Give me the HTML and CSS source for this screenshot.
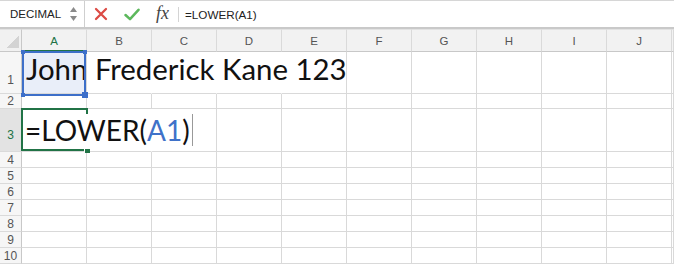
FILE: index.html
```html
<!DOCTYPE html>
<html lang="en">
<head>
<meta charset="UTF-8">
<title>LOWER</title>
<link rel="stylesheet" href="styles.css">
</head>
<body>
  <div class="formula-bar">
    <div class="name-box">
      <span>DECIMAL</span>
      <svg class="spin" width="9" height="16" viewBox="0 0 9 16">
        <path d="M4.5 1 L8 6 L1 6 Z" fill="#8a8a8a"/>
        <path d="M1 10 L8 10 L4.5 15 Z" fill="#8a8a8a"/>
      </svg>
    </div>
    <div class="tool">
      <svg width="14" height="14" viewBox="0 0 14 14">
        <path d="M2 2 L12 12 M12 2 L2 12" stroke="#dc4b45" stroke-width="2.3" stroke-linecap="round"/>
      </svg>
    </div>
    <div class="tool">
      <svg width="16" height="13" viewBox="0 0 16 13">
        <path d="M1.5 7 L6 11.2 L14.5 1.8" fill="none" stroke="#5cb85c" stroke-width="2.5" stroke-linecap="round" stroke-linejoin="round"/>
      </svg>
    </div>
    <div class="tool fx">fx</div>
    <div class="formula">=LOWER(A1)</div>
  </div>

  <div class="sheet">
    <div class="corner"></div>
    <div class="h sel">A</div><div class="h">B</div><div class="h">C</div><div class="h">D</div><div class="h">E</div>
    <div class="h">F</div><div class="h">G</div><div class="h">H</div><div class="h">I</div><div class="h">J</div><div class="h"></div>

    <div class="rh low">1</div>
    <div class="c ref"><span class="val">John Frederick Kane 123</span><div class="ref-box"><i class="tl"></i><i class="tr"></i><i class="bl"></i><i class="br"></i></div></div>
    <div class="c nr"></div><div class="c nr"></div><div class="c nr"></div><div class="c"></div>
    <div class="c"></div><div class="c"></div><div class="c"></div><div class="c"></div><div class="c"></div><div class="c"></div>

    <div class="rh">2</div>
    <div class="c"></div><div class="c"></div><div class="c"></div><div class="c"></div><div class="c"></div>
    <div class="c"></div><div class="c"></div><div class="c"></div><div class="c"></div><div class="c"></div><div class="c"></div>

    <div class="rh low active">3</div>
    <div class="c edit"><span class="val big">=LOWER(<span class="blue">A1</span>)<span class="caret"></span></span><div class="active-box"><i></i></div></div>
    <div class="c nr"></div><div class="c"></div><div class="c"></div><div class="c"></div>
    <div class="c"></div><div class="c"></div><div class="c"></div><div class="c"></div><div class="c"></div><div class="c"></div>

    <div class="rh">4</div>
    <div class="c"></div><div class="c"></div><div class="c"></div><div class="c"></div><div class="c"></div>
    <div class="c"></div><div class="c"></div><div class="c"></div><div class="c"></div><div class="c"></div><div class="c"></div>

    <div class="rh">5</div>
    <div class="c"></div><div class="c"></div><div class="c"></div><div class="c"></div><div class="c"></div>
    <div class="c"></div><div class="c"></div><div class="c"></div><div class="c"></div><div class="c"></div><div class="c"></div>

    <div class="rh">6</div>
    <div class="c"></div><div class="c"></div><div class="c"></div><div class="c"></div><div class="c"></div>
    <div class="c"></div><div class="c"></div><div class="c"></div><div class="c"></div><div class="c"></div><div class="c"></div>

    <div class="rh">7</div>
    <div class="c"></div><div class="c"></div><div class="c"></div><div class="c"></div><div class="c"></div>
    <div class="c"></div><div class="c"></div><div class="c"></div><div class="c"></div><div class="c"></div><div class="c"></div>

    <div class="rh">8</div>
    <div class="c"></div><div class="c"></div><div class="c"></div><div class="c"></div><div class="c"></div>
    <div class="c"></div><div class="c"></div><div class="c"></div><div class="c"></div><div class="c"></div><div class="c"></div>

    <div class="rh">9</div>
    <div class="c"></div><div class="c"></div><div class="c"></div><div class="c"></div><div class="c"></div>
    <div class="c"></div><div class="c"></div><div class="c"></div><div class="c"></div><div class="c"></div><div class="c"></div>

    <div class="rh">10</div>
    <div class="c"></div><div class="c"></div><div class="c"></div><div class="c"></div><div class="c"></div>
    <div class="c"></div><div class="c"></div><div class="c"></div><div class="c"></div><div class="c"></div><div class="c"></div>
  </div>
</body>
</html>
```

FILE: styles.css
```css
html, body {
  margin: 0;
  height: 100%;
  overflow: hidden;
}
body {
  font-family: "Liberation Sans", Arial, sans-serif;
  background: #fff;
  color: #222;
}

/* Formula bar */
.formula-bar {
  display: flex;
  height: 26px;
  border-top: 1px solid #d6d6d6;
  border-bottom: 2px solid #c9c9c9;
  box-sizing: content-box;
}
.name-box {
  width: 85px;
  border-right: 1px solid #cfcfcf;
  display: flex;
  align-items: center;
  justify-content: space-between;
  padding: 0 6px 0 10px;
  box-sizing: border-box;
  font-size: 11.5px;
  color: #222;
}
.tool {
  width: 31px;
  display: flex;
  align-items: center;
  justify-content: center;
}
.tool:first-of-type {
  margin-left: 3px;
}
.fx {
  font-family: "Liberation Serif", "Times New Roman", serif;
  font-style: italic;
  font-size: 18px;
  color: #444;
  padding-bottom: 2px;
}
.formula {
  position: relative;
  display: flex;
  align-items: center;
  padding-left: 7px;
  font-size: 11.7px;
  color: #222;
}
.formula:before {
  content: "";
  position: absolute;
  left: 0;
  top: 6px;
  bottom: 5px;
  border-left: 1px solid #d4d4d4;
}

/* Sheet grid */
.sheet {
  display: grid;
  grid-template-columns: 22px repeat(10, 65px) 2px;
  grid-template-rows: 23px 42px 15px 43px repeat(7, 16px);
}
.sheet > div {
  box-sizing: border-box;
  min-width: 0;
}
.corner {
  background: #f1f1f1 linear-gradient(to top left, #d3d3d3 0 45%, transparent 46%) no-repeat right 2px bottom 3px / 14px 14px;
  border-right: 1px solid #c8c8c8;
  border-bottom: 1px solid #c8c8c8;
  border-top: 1px solid #e2e2e2;
}
.h {
  background: #f2f2f2;
  border-right: 1px solid #dadada;
  border-bottom: 1px solid #c8c8c8;
  border-top: 1px solid #e2e2e2;
  display: flex;
  align-items: center;
  justify-content: center;
  font-size: 11.5px;
  color: #555;
}
.h.sel {
  color: #217346;
  border-bottom: 2px solid #217346;
  padding-top: 1px;
}
.rh {
  background: #f6f6f6;
  border-right: 1px solid #c8c8c8;
  border-bottom: 1px solid #dadada;
  display: flex;
  align-items: center;
  justify-content: center;
  font-size: 12px;
  color: #555;
  line-height: 14px;
}
.rh.low {
  align-items: flex-end;
  padding-bottom: 6px;
}
.rh.active {
  background: #e3e3e3;
  color: #217346;
  padding-bottom: 9px;
}
.c {
  position: relative;
  border-right: 1px solid #d9d9d9;
  border-bottom: 1px solid #d9d9d9;
  display: flex;
  align-items: flex-end;
}
.c.nr {
  border-right-color: transparent;
}

/* Cell text */
.val {
  font-family: Lato, "Open Sans", sans-serif;
  font-size: 29.4px;
  line-height: 30px;
  white-space: nowrap;
  color: #111;
  padding: 0 0 9px 4px;
  position: relative;
  z-index: 1;
}
.val.big {
  font-size: 28px;
  line-height: 32px;
  padding: 0 4px 3px 2px;
  margin: 0 0 2px 1px;
  background: #fff;
  z-index: 3;
}
.blue {
  color: #3f72c9;
}
.caret {
  display: inline-block;
  width: 1px;
  height: 32px;
  margin-left: 2px;
  background: #999;
  vertical-align: -5px;
}

/* Reference highlight on A1 */
.ref {
  background: #e9eef9;
}
.ref-box {
  position: absolute;
  top: -1px;
  left: 0;
  right: 0;
  bottom: -3px;
  border: 2px solid #3d6fc9;
  z-index: 2;
}
.ref-box i {
  position: absolute;
  width: 4px;
  height: 4px;
  background: #3d6fc9;
}
.ref-box .tl { left: -3px; top: -3px; }
.ref-box .tr { right: -3px; top: -3px; }
.ref-box .bl { left: -3px; bottom: -3px; }
.ref-box .br { right: -4px; bottom: -4px; width: 6px; height: 6px; }

/* Active cell A3 */
.active-box {
  position: absolute;
  top: -1px;
  left: -1px;
  right: -2px;
  bottom: 0;
  border: 2px solid #217346;
  z-index: 2;
}
.active-box i {
  position: absolute;
  right: -4px;
  bottom: -4px;
  width: 5px;
  height: 4px;
  background: #217346;
  border-left: 1px solid #fff;
  border-top: 1px solid #fff;
}
```
